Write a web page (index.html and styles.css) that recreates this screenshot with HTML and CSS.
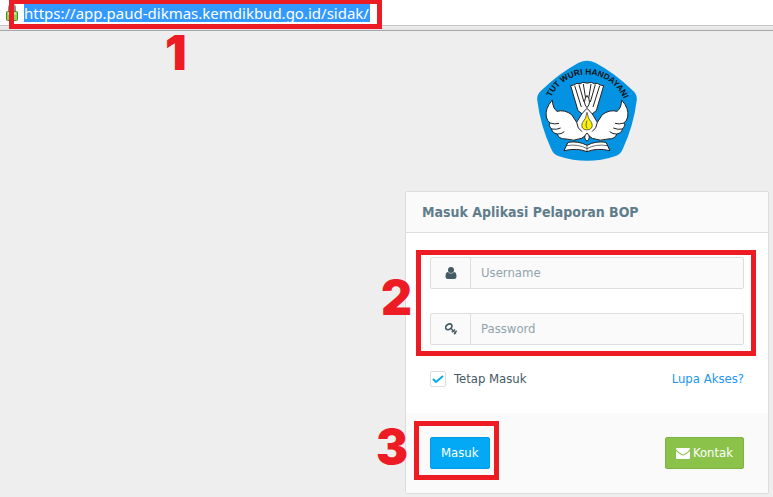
FILE: index.html
```html
<!DOCTYPE html>
<html lang="id">
<head>
  <meta charset="UTF-8" />
  <meta name="viewport" content="width=device-width, initial-scale=1.0"/>
  <title>Masuk Aplikasi Pelaporan BOP</title>
  <link rel="stylesheet" href="styles.css">
</head>
<body>
  <header class="address-bar">
    <svg class="lock" viewBox="0 0 12 18" aria-hidden="true">
      <path d="M3 9V4a3 3 0 0 1 6 0v5" fill="none" stroke="#8a8a8a" stroke-width="2"/>
      <rect x="0.500" y="7.500" width="11" height="9" rx="1" fill="#8fd45a" stroke="#4c8a2b"/>
      <path d="M2 9.500h8" stroke="#c9f0a4" stroke-width="2"/>
    </svg>
    <input class="url" type="text" aria-label="URL" value="https://app.paud-dikmas.kemdikbud.go.id/sidak/">
    <span class="mark mark-url"></span>
    <span class="step step-1">1</span>
  </header>

  <main class="login">
    <svg class="logo" viewBox="30 24 300 306" role="img" aria-label="Tut Wuri Handayani">
      <path d="M155 32Q180 20 205 32Q262 62 318 116Q332 128 329 146Q320 220 287 292Q280 308 264 313Q180 340 96 313Q80 308 73 292Q40 220 31 146Q28 128 42 116Q98 62 155 32Z" fill="#0492e2"/>
      <path id="motto" d="M72 136A119 119 0 0 1 293 150" fill="none"/>
      <text class="motto"><textPath href="#motto">TUT WURI HANDAYANI</textPath></text>
      <g fill="#fff" stroke="#222" stroke-width="3" stroke-linejoin="round">
        <path d="M131 101Q141 100 150 94Q160 98 168 91Q181 96 193 91Q202 98 211 94Q220 101 230 101L208 176L180 197L153 176Z"/>
        <path d="M143 101L163 165M156 98L171 150M169 96L176 140M192 96L185 140M205 98L190 150M218 101L198 165" fill="none"/>
        <path d="M76 144Q53 170 58 195Q61 209 70 213Q62 219 74 231Q75 243 91 246Q94 261 117 261Q139 269 164 259L180 247L196 259Q221 269 243 261Q266 261 269 246Q285 243 286 231Q298 219 290 213Q299 209 302 195Q307 170 284 144Q283 169 270 178Q247 172 226 188L211 211L196 186L180 169L164 186L149 211L134 188Q113 172 90 178Q77 169 76 144Z"/>
        <path d="M70 213Q83 218 96 214M74 231Q88 234 101 228M91 246Q103 247 112 239M290 213Q277 218 264 214M286 231Q272 234 259 228M269 246Q257 247 248 239M149 211Q151 230 165 239M211 211Q209 230 195 239" fill="none"/>
        <path d="M180 130Q165 151 180 167Q195 151 180 130Z"/>
        <path d="M180 181Q177 202 166 212Q159 232 180 234Q201 232 194 212Q183 202 180 181Z" fill="#fff200" stroke-width="2"/>
        <path d="M180 206Q174 222 181 229" fill="none" stroke-width="2"/>
        <path d="M123 271Q154 266 180 280Q206 266 237 271L249 296Q210 287 180 299Q150 287 111 296Z"/>
        <path d="M119 281Q153 275 180 290Q207 275 241 281M180 280V299" fill="none" stroke-width="2"/>
        <path d="M180 243Q166 256 180 268Q194 256 180 243Z"/>
      </g>
    </svg>

    <form class="card">
      <h1 class="card-title">Masuk Aplikasi Pelaporan BOP</h1>

      <div class="card-body">
        <div class="fields">
          <div class="field">
            <label class="addon" for="username" aria-label="Username">
              <svg class="icon" viewBox="0 0 12 12" fill="#455a64" aria-hidden="true">
                <circle cx="6" cy="3" r="3"/>
                <path d="M3 5Q0.500 5 0.500 10Q0.500 12 3 12H9Q11.500 12 11.500 10Q11.500 5 9 5Q6 8 3 5Z"/>
              </svg>
            </label>
            <input type="text" id="username" placeholder="Username">
          </div>
          <div class="field">
            <label class="addon" for="password" aria-label="Password">
              <svg class="icon" viewBox="0 0 12 12" fill="none" stroke="#455a64" aria-hidden="true">
                <ellipse cx="3.800" cy="3.800" rx="3.400" ry="2.500" transform="rotate(-35 3.800 3.800)" stroke-width="1.700"/>
                <path d="M5.500 5L11 10.500M8 8L6.800 9.200M10.200 10L9 11.200M8.500 8L10 6.500M10 9.500L11.700 7.800" stroke-width="1.400"/>
              </svg>
            </label>
            <input type="password" id="password" placeholder="Password">
          </div>
          <span class="mark mark-fields"></span>
          <span class="step step-2">2</span>
        </div>

        <div class="options">
          <label class="remember"><input type="checkbox" checked> Tetap Masuk</label>
          <a href="#">Lupa Akses?</a>
        </div>
      </div>

      <div class="card-footer">
        <div class="submit">
          <button type="submit" class="btn btn-primary">Masuk</button>
          <span class="mark mark-submit"></span>
          <span class="step step-3">3</span>
        </div>
        <button type="button" class="btn btn-success">
          <svg class="envelope" viewBox="0 0 14 12" fill="#fff" aria-hidden="true">
            <path d="M0 2Q0 1 1 1H13Q14 1 14 2Q13 4 8.500 6.800Q7 8 5.500 6.800Q1 4 0 2Z"/>
            <path d="M0 4Q2 6 5 7.800Q7 9.300 9 7.800Q12 6 14 4V11Q14 12 13 12H1Q0 12 0 11Z"/>
          </svg>
          Kontak
        </button>
      </div>
    </form>
  </main>
</body>
</html>
```
FILE: styles.css
```css
* {
  box-sizing: border-box;
}
body {
  margin: 0;
  background: #eee;
  color: #455a64;
  font-family: "DejaVu Sans Condensed", "DejaVu Sans", sans-serif;
  font-size: 13px;
  line-height: 20px;
}
input, button {
  font: inherit;
}

/* address bar */
.address-bar {
  position: relative;
  display: flex;
  align-items: flex-start;
  gap: 6px;
  height: 31px;
  padding: 4px 6px 0;
  background: linear-gradient(#fff 25px, #c4c4c4 25px, #c4c4c4 26px, #eee 26px, #e4e4e4 30px, #a8a8a8 30px);
}
.lock {
  width: 12px;
  height: 18px;
}
.url {
  width: 346px;
  height: 18px;
  padding: 0;
  border: 0;
  background: #3399ff;
  color: #fff;
  font-family: "Noto Sans", sans-serif;
  font-size: 15px;
  line-height: 18px;
}

/* red step marks */
.mark {
  position: absolute;
  border: 5px solid #ed1c24;
  pointer-events: none;
}
.mark-url {
  top: -1px;
  left: 9px;
  width: 373px;
  height: 30px;
}
.mark-fields {
  inset: -7px -12px -11px -14px;
}
.mark-submit {
  inset: -16px -9px -11px -16px;
}
.step {
  position: absolute;
  color: #ed1c24;
  font: 900 48px/48px Inter, sans-serif;
}
.step-1 {
  top: 29px;
  left: 165px;
}
.step-2 {
  top: 17px;
  left: -49px;
}
.step-3 {
  top: -14px;
  left: -54px;
}

/* login */
.login {
  width: 364px;
  margin: 29px 4px 0 auto;
}
.logo {
  display: block;
  width: 100px;
  height: 102px;
  margin: 0 auto 29px;
}
.motto {
  fill: #111;
  font: bold 25px "Liberation Sans", Arial, sans-serif;
}
.card {
  border: 1px solid #ddd;
  border-radius: 2px;
  background: #fff;
}
.card-title {
  margin: 0;
  padding: 10px 16px;
  border-bottom: 1px solid #ddd;
  background: #fafafa;
  color: #607d8b;
  font-size: 14px;
  line-height: 20px;
}
.card-body {
  padding: 24px;
}
.fields {
  position: relative;
  display: grid;
  gap: 24px;
}
.field {
  display: flex;
  height: 32px;
  border: 1px solid #ddd;
  border-radius: 2px;
  background: #fafafa;
}
.addon {
  display: flex;
  align-items: center;
  justify-content: center;
  width: 40px;
  border-right: 1px solid #ddd;
}
.icon {
  width: 12px;
  height: 12px;
}
.field input {
  flex: 1;
  min-width: 0;
  padding: 0 10px;
  border: 0;
  background: none;
}
.field input::placeholder {
  color: #90a4ae;
}
.options {
  display: flex;
  justify-content: space-between;
  margin-top: 24px;
}
.remember {
  display: flex;
  align-items: center;
  gap: 8px;
}
.remember input {
  appearance: none;
  width: 16px;
  height: 16px;
  margin: 0;
  border: 1px solid #ddd;
  border-radius: 2px;
  background: #fff url("data:image/svg+xml,%3Csvg xmlns='http://www.w3.org/2000/svg' viewBox='0 0 14 14'%3E%3Cpath d='M2 7l3 3 7-6' fill='none' stroke='%2303a9f4' stroke-width='2'/%3E%3C/svg%3E");
}
a {
  color: #2196f3;
  text-decoration: none;
}
.card-footer {
  display: flex;
  justify-content: space-between;
  padding: 24px;
  background: #fafafa;
}
.submit {
  position: relative;
}
.btn {
  display: flex;
  align-items: center;
  gap: 3px;
  height: 32px;
  padding: 0 10px;
  border: 1px solid;
  border-radius: 2px;
  color: #fff;
}
.btn-primary {
  border-color: #039be5;
  background: #03a9f4;
}
.btn-success {
  border-color: #7cb342;
  background: #8bc34a;
}
.envelope {
  width: 14px;
  height: 12px;
}
```
